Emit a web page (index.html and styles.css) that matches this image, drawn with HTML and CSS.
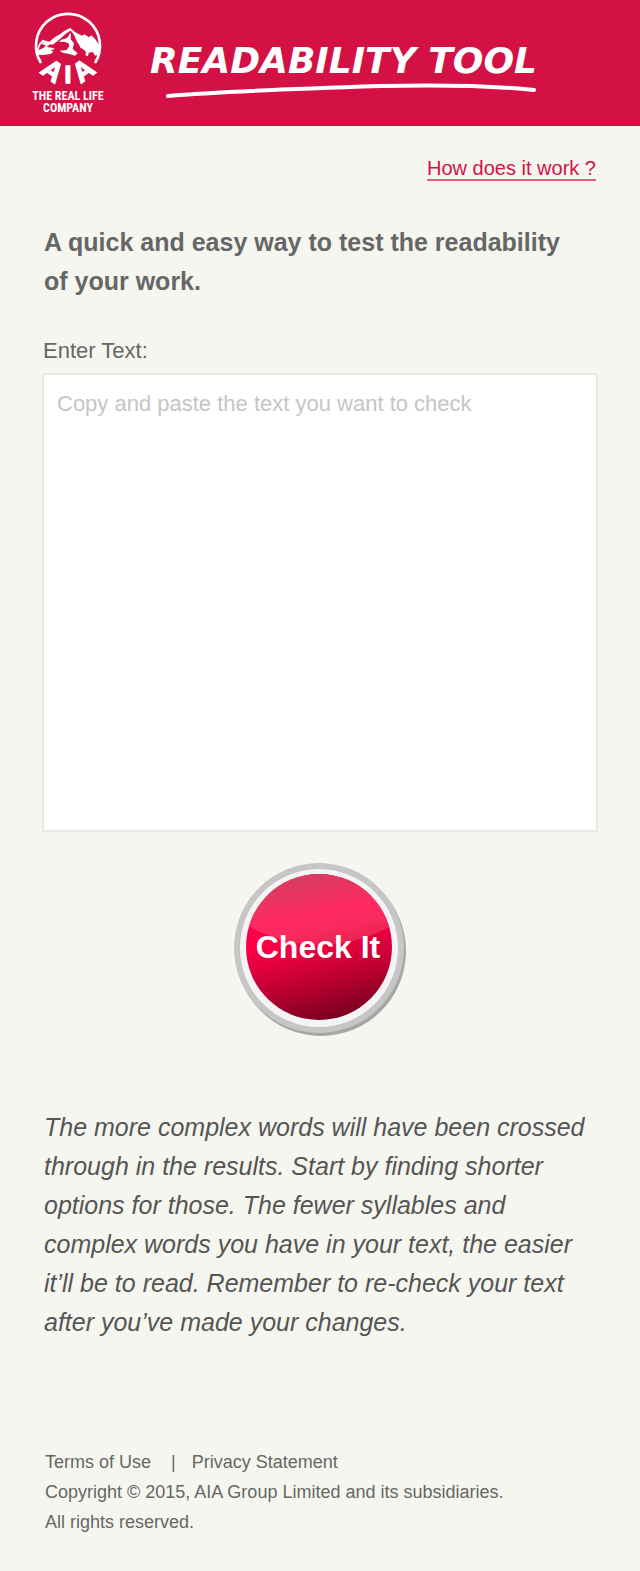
FILE: index.html
```html
<!DOCTYPE html>
<html lang="en">
<head>
<meta charset="utf-8">
<meta name="viewport" content="width=device-width, initial-scale=1">
<title>AIA Readability Tool</title>
<link rel="stylesheet" href="styles.css">
</head>
<body>
<header class="banner">
  <div class="brand">
    <svg class="brand-mark" viewBox="39 36 210 222" aria-label="AIA">
      <path class="ring" d="M63 189 A96 96 0 1 1 225 189"/>
      <path class="snow" d="M50 150 L58 130 L68 119 L77 122 L88 125 L104 112 L120 103 L134 92 L150 84 L158 92 L150 93 L140 99 L126 112 L112 124 L98 134 L90 133 L80 141 L96 143 L104 146 Q100 150 92 150 L100 155 L92 162 L70 165 L50 164 Z"/>
      <path class="snow" d="M150 98 L146 108 L140 115 L124 119 L117 126 L133 125 L146 130 L148 138 L140 150 L119 152 L128 158 L148 162 L165 167 L173 160 L164 152 L158 146 L162 130 L157 124 L152 118 L153 104 Z"/>
      <path class="snow" d="M150 84 L166 97 L186 107 L194 103 L206 112 L214 106 L226 118 L234 130 L242 142 L239 152 L234 164 L226 167 L218 156 L206 158 L204 169 L196 165 L198 156 L190 148 L182 144 L176 132 L170 124 L164 108 L154 94 Z"/>
      <path class="rock" d="M72 127 L66 133 L78 136 L70 144 L55 150 L61 135 Z"/>
      <g class="brand-letters">
        <text x="82" y="234" transform="rotate(36 82 234)">A</text>
        <text class="letter-i" x="144" y="248">I</text>
        <text x="206" y="234" transform="rotate(-36 206 234)">A</text>
      </g>
    </svg>
    <p class="brand-line">THE REAL LIFE<br>COMPANY</p>
  </div>
  <div class="title">
    <h1 class="title-text">READABILITY TOOL</h1>
    <svg class="title-stroke" viewBox="0 0 372 16" aria-hidden="true">
      <path d="M2 13 Q60 8 215 3 Q310 1 368 7"/>
    </svg>
  </div>
</header>
<main class="page">
  <p class="help"><a class="help-link" href="#how">How does it work ?</a></p>
  <h2 class="intro">A quick and easy way to test the readability of your work.</h2>
  <form class="checker">
    <label class="field-label" for="text">Enter Text:</label>
    <textarea class="field" id="text" placeholder="Copy and paste the text you want to check"></textarea>
    <button class="check" type="button">
      <svg class="check-art" viewBox="0 0 174 174" aria-hidden="true">
        <defs>
          <linearGradient id="base" x1="0.35" y1="0" x2="0.6" y2="1">
            <stop offset="0.4" stop-color="#ff0046"/><stop offset="0.65" stop-color="#cf0036"/><stop offset="1" stop-color="#78001e"/>
          </linearGradient>
          <linearGradient id="gloss" gradientUnits="userSpaceOnUse" x1="78" y1="11" x2="92" y2="82">
            <stop offset="0" stop-color="#d63c62"/><stop offset="0.55" stop-color="#ff2a60"/><stop offset="0.8" stop-color="#f92a5e"/><stop offset="1" stop-color="#e82451"/>
          </linearGradient>
          <clipPath id="face"><circle cx="86" cy="84" r="73"/></clipPath>
        </defs>
        <circle cx="88" cy="88" r="85" fill="#a6a7a4"/>
        <circle cx="86" cy="85" r="85" fill="#c6c6c6"/>
        <circle cx="86" cy="85" r="79" fill="#f4f4f6"/>
        <circle cx="86" cy="84" r="73" fill="url(#base)"/>
        <path clip-path="url(#face)" fill="url(#gloss)" d="M0 0 H174 V54 Q86 110 0 54 Z"/>
      </svg>
      <span class="check-label">Check It</span>
    </button>
  </form>
  <p class="advice">The more complex words will have been crossed through in the results. Start by finding shorter options for those. The fewer syllables and complex words you have in your text, the easier it’ll be to read. Remember to re-check your text after you’ve made your changes.</p>
</main>
<footer class="legal">
  <nav class="legal-links"><a href="#terms">Terms of Use</a><span class="divider">|</span><a href="#privacy">Privacy Statement</a></nav>
  <p>Copyright © 2015, AIA Group Limited and its subsidiaries.</p>
  <p>All rights reserved.</p>
</footer>
</body>
</html>
```
FILE: styles.css
```css
* { box-sizing: border-box; }
body, h1, h2, p { margin: 0; }
body {
  background: #f5f6f0;
  color: #666;
  font-family: "Liberation Sans", Arial, sans-serif;
}
.banner {
  display: flex;
  align-items: flex-start;
  gap: 46px;
  padding: 12px 32px 10px;
  background: #d31145;
  color: #fff;
}
.brand { display: flex; flex-direction: column; align-items: center; width: 72px; }
.brand-mark { width: 70px; height: 74px; overflow: visible; }
.ring { fill: none; stroke: #fff; stroke-width: 8; }
.snow { fill: #fff; }
.rock { fill: #d31145; }
.brand-letters { fill: #fff; stroke: #fff; stroke-width: 4; font: bold 82px "Liberation Sans", Arial, sans-serif; text-anchor: middle; }
.letter-i { font-size: 74px; }
.brand-line {
  padding: 4px 0 2px;
  font: bold 12px/12px "Roboto Condensed", "Liberation Sans Narrow", Roboto, sans-serif;
  text-align: center;
  white-space: nowrap;
}
.title { padding-top: 27px; }
.title-text { font: italic bold 36px/44px "DejaVu Sans", sans-serif; white-space: nowrap; }
.title-stroke { display: block; width: 372px; margin-left: 16px; overflow: visible; }
.title-stroke path { fill: none; stroke: #fff; stroke-width: 4; stroke-linecap: round; }
.page { padding: 31px 42px 0; }
.help { padding-right: 2px; text-align: right; line-height: 26px; }
.help-link { display: inline-block; color: #d31145; font-size: 20px; line-height: 21px; text-decoration: none; border-bottom: 2px solid #e4627f; }
.intro { padding: 40px 24px 0 2px; font-size: 25px; line-height: 39px; }
.checker { display: flex; flex-direction: column; align-items: center; padding-top: 36px; }
.field-label { align-self: flex-start; padding-left: 1px; font-size: 22px; line-height: 28px; }
.field {
  width: 100%;
  height: 459px;
  margin-top: 8px;
  padding: 15px 13px;
  border: 2px solid #e9eae8;
  background: #fff;
  color: #666;
  font: 22px/28px "Liberation Sans", Arial, sans-serif;
  resize: none;
}
.field::placeholder { color: #c5c5c5; opacity: 1; }
.check { display: grid; margin-top: 31px; padding: 0; border: 0; background: none; color: #fff; cursor: pointer; }
.check-art, .check-label { grid-area: 1 / 1; }
.check-art { width: 174px; height: 174px; }
.check-label { place-self: center; padding: 0 4px 6px 0; font: bold 32px/40px "Liberation Sans", Arial, sans-serif; }
.advice { padding: 71px 2px 0; color: #555; font-size: 25px; font-style: italic; line-height: 39px; }
.legal { padding: 105px 45px 33px; font-size: 18px; line-height: 30px; }
.legal a { color: inherit; text-decoration: none; }
.legal-links { display: flex; gap: 16px; }
.divider { padding-left: 4px; }
```
